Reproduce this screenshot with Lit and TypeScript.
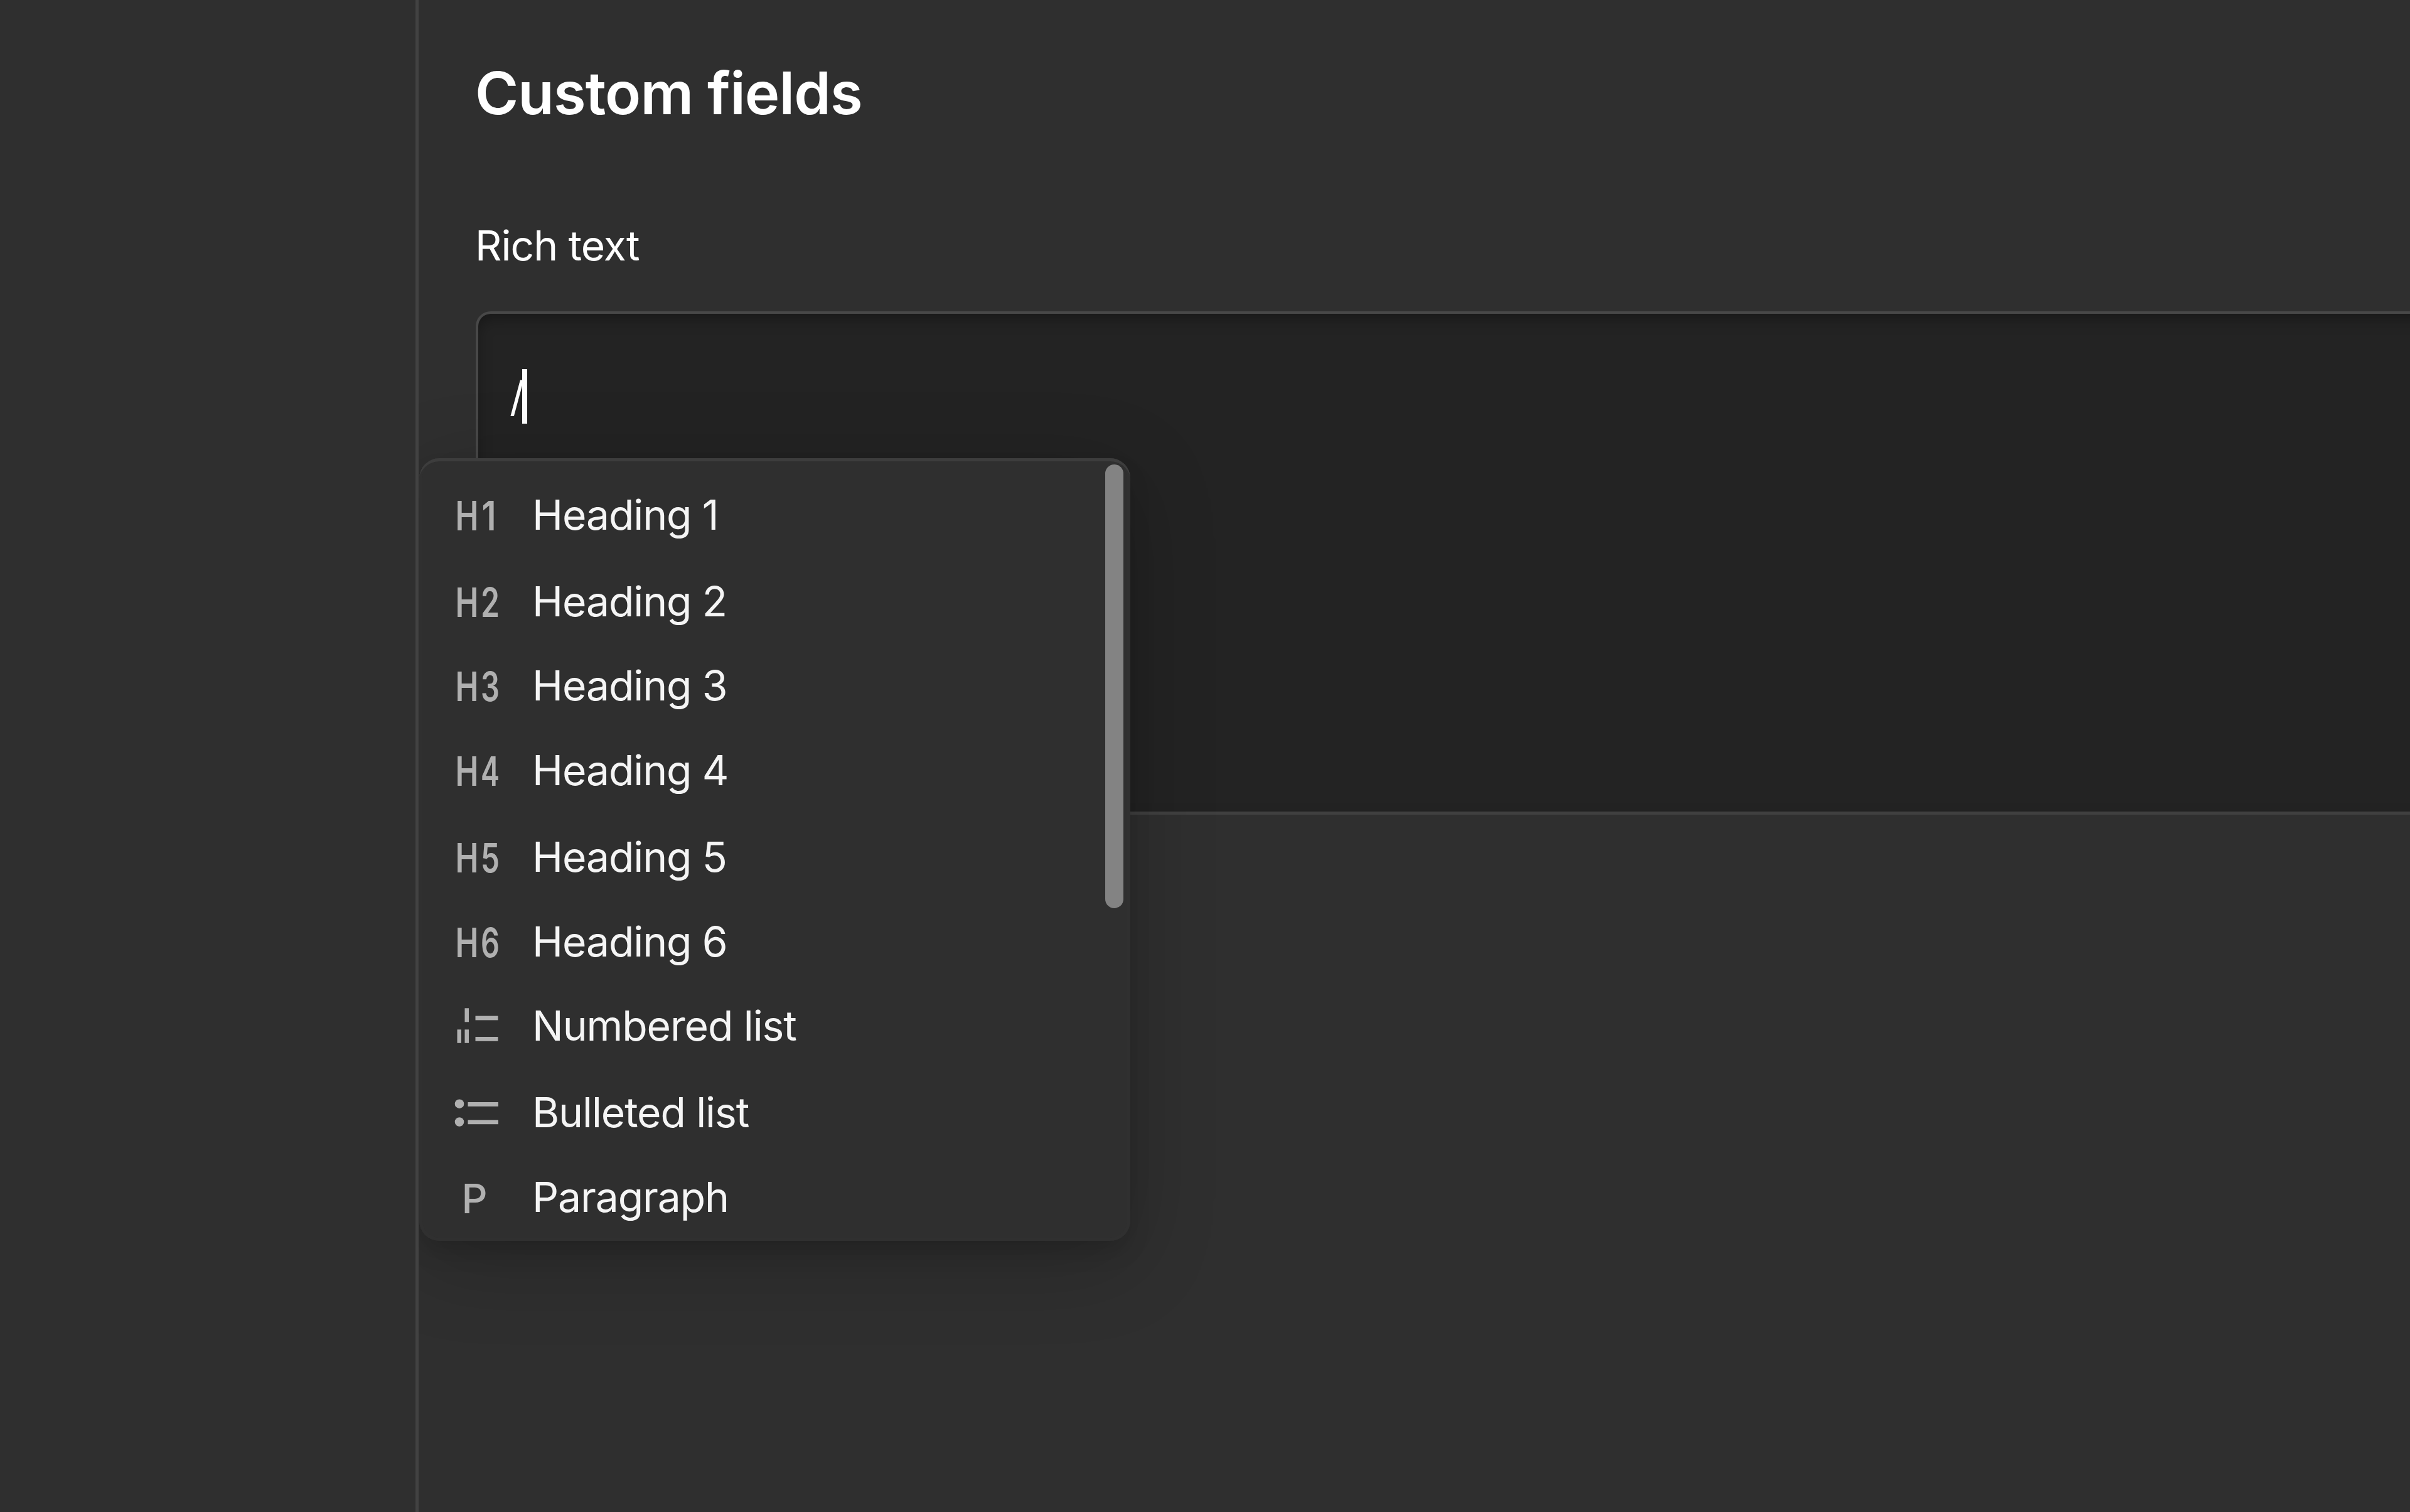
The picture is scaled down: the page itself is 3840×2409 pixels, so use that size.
import {LitElement, html, svg, css, TemplateResult} from 'lit';
import {customElement, property} from 'lit/decorators.js';

interface BlockOption {
  label: string;
  icon: string;
}

const OPTIONS: BlockOption[] = [
  {label: 'Heading 1', icon: 'h1'},
  {label: 'Heading 2', icon: 'h2'},
  {label: 'Heading 3', icon: 'h3'},
  {label: 'Heading 4', icon: 'h4'},
  {label: 'Heading 5', icon: 'h5'},
  {label: 'Heading 6', icon: 'h6'},
  {label: 'Numbered list', icon: 'numbered'},
  {label: 'Bulleted list', icon: 'bulleted'},
  {label: 'Paragraph', icon: 'paragraph'},
];

@customElement('block-icon')
export class BlockIcon extends LitElement {
  static override styles = css`
    :host {
      display: block;
      width: 76px;
      height: 58px;
    }

    svg {
      display: block;
      width: 76px;
      height: 58px;
      overflow: visible;
      fill: #b0b0b0;
    }

    text {
      font-family: Inter, "Liberation Sans", sans-serif;
      font-size: 64px;
      font-weight: 600;
      letter-spacing: 0;
    }

    .letter {
      font-weight: 500;
    }
  `;

  @property() name = '';

  override render() {
    return html`<svg viewBox="0 0 76 58">${this._shape()}</svg>`;
  }

  private _shape(): TemplateResult {
    switch (this.name) {
      case 'numbered':
        return svg`
          <rect x="16.5" y="1.3" width="6.5" height="22" />
          <rect x="4.5" y="35.3" width="6.5" height="21.5" />
          <rect x="16.5" y="35.3" width="6.5" height="21.5" />
          <rect x="33.5" y="13.6" width="36" height="6.8" />
          <rect x="33.5" y="47" width="36" height="6.8" />
        `;
      case 'bulleted':
        return svg`
          <circle cx="8" cy="15.7" r="7.3" />
          <circle cx="8" cy="44.5" r="7.3" />
          <rect x="21.5" y="13" width="48.5" height="6.8" />
          <rect x="21.5" y="41.4" width="48.5" height="6.8" />
        `;
      case 'paragraph':
        return svg`<text class="letter" x="11.5" y="54.5">P</text>`;
      case 'h1':
        return svg`
          <text x="1.5" y="54" textLength="37" lengthAdjust="spacingAndGlyphs">H</text>
          <text x="43.5" y="54" textLength="23" lengthAdjust="spacingAndGlyphs">1</text>
        `;
      default:
        return svg`
          <text x="1.5" y="54" textLength="37" lengthAdjust="spacingAndGlyphs">H</text>
          <text x="42" y="54" textLength="30" lengthAdjust="spacingAndGlyphs">${this.name.slice(1)}</text>
        `;
    }
  }
}

@customElement('slash-menu')
export class SlashMenu extends LitElement {
  static override styles = css`
    :host {
      display: flex;
      justify-content: space-between;
      box-sizing: border-box;
      width: 1133px;
      height: 1247px;
      padding: 10px 11px 0 56px;
      overflow: hidden;
      border-radius: 32px;
      background: #2f2f2f;
      box-shadow:
        inset 0 6px 0 -1px #3d3d3d,
        inset 0 0 0 5px #303030,
        0 20px 40px -8px rgba(0, 0, 0, 0.16),
        0 30px 140px rgba(0, 0, 0, 0.2);
    }

    .list {
      margin: 0;
      padding: 12.7px 0 0;
      list-style: none;
    }

    .item {
      display: flex;
      align-items: center;
      gap: 48px;
      height: 134.8px;
      color: #f5f5f5;
      font-size: 66px;
      letter-spacing: -1.1px;
      line-height: 80px;
      white-space: nowrap;
    }

    .item:nth-child(3n + 1) {
      margin-bottom: 2.8px;
    }

    .thumb {
      width: 29px;
      height: 707px;
      border-radius: 15px;
      background: #838383;
    }
  `;

  override render() {
    return html`
      <ul class="list">
        ${OPTIONS.map(
          (option) => html`
            <li class="item">
              <block-icon name=${option.icon}></block-icon>
              <span>${option.label}</span>
            </li>
          `
        )}
      </ul>
      <div class="thumb"></div>
    `;
  }
}

@customElement('app-root')
export class AppRoot extends LitElement {
  static override styles = css`
    :host {
      display: flex;
      width: 100vw;
      height: 100vh;
      overflow: hidden;
      background: #2f2f2f;
      color: #fff;
      font-family: Inter, "Liberation Sans", sans-serif;
    }

    .sidebar {
      flex: none;
      width: 662px;
      border-right: 5px solid #424242;
    }

    .content {
      position: relative;
      flex: 1;
      padding: 90px 0 0 91px;
      overflow: hidden;
    }

    .title {
      margin: 0 0 145px -1px;
      font-size: 94px;
      font-weight: 600;
      letter-spacing: -0.9px;
      line-height: 116px;
    }

    .label {
      margin: 0 0 65px -1px;
      font-size: 66px;
      letter-spacing: -1px;
      line-height: 80px;
    }

    /* runs past the right edge of the viewport */
    .editor {
      display: flex;
      align-items: flex-start;
      box-sizing: border-box;
      height: 802px;
      margin-right: -60px;
      padding: 88px 0 0 50px;
      border: 4px solid #484848;
      border-bottom: 5px solid #404040;
      border-radius: 24px;
      background: #232323;
      box-shadow: inset 0 10px 24px -4px rgba(0, 0, 0, 0.35);
      font-size: 66px;
      line-height: 88px;
    }

    .caret {
      width: 8px;
      height: 87px;
      margin-left: -4px;
      background: #fff;
    }

    .menu {
      position: absolute;
      top: 730px;
      left: 1px;
    }
  `;

  override render() {
    return html`
      <aside class="sidebar"></aside>
      <main class="content">
        <h1 class="title">Custom fields</h1>
        <div class="label">Rich text</div>
        <div class="editor">
          <span>/</span>
          <span class="caret"></span>
        </div>
        <slash-menu class="menu"></slash-menu>
      </main>
    `;
  }
}

declare global {
  interface HTMLElementTagNameMap {
    'app-root': AppRoot;
    'slash-menu': SlashMenu;
    'block-icon': BlockIcon;
  }
}
